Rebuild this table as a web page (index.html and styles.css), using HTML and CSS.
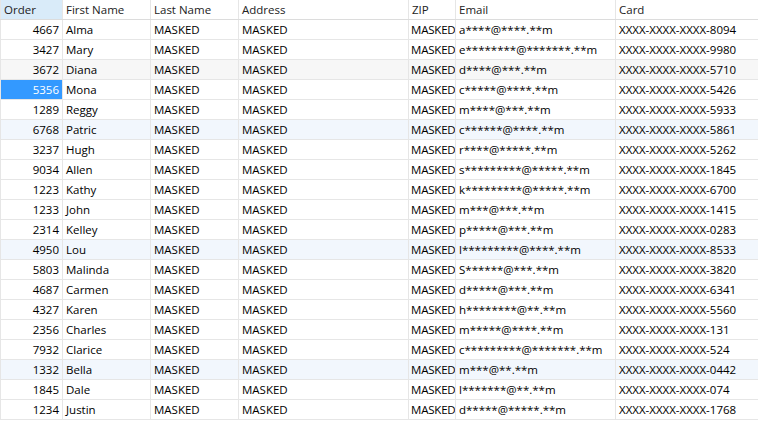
FILE: index.html
```html
<!DOCTYPE html>
<html lang="en">
<head>
    <meta charset="UTF-8">
    <title>Customers</title>
    <link rel="stylesheet" href="styles.css">
</head>
<body>
    <div class="grid">
        <table>
            <colgroup>
                <col class="c-order">
                <col class="c-first">
                <col class="c-last">
                <col class="c-addr">
                <col class="c-zip">
                <col class="c-email">
                <col class="c-card">
            </colgroup>
            <thead>
                <tr>
                    <th class="sorted">Order</th>
                    <th>First Name</th>
                    <th>Last Name</th>
                    <th>Address</th>
                    <th>ZIP</th>
                    <th>Email</th>
                    <th>Card</th>
                </tr>
            </thead>
            <tbody>
                <tr><td class="num">4667</td><td>Alma</td><td>MASKED</td><td>MASKED</td><td class="zip">MASKED</td><td>a****@****.**m</td><td>XXXX-XXXX-XXXX-8094</td></tr>
                <tr><td class="num">3427</td><td>Mary</td><td>MASKED</td><td>MASKED</td><td class="zip">MASKED</td><td>e********@*******.**m</td><td>XXXX-XXXX-XXXX-9980</td></tr>
                <tr class="alt"><td class="num">3672</td><td>Diana</td><td>MASKED</td><td>MASKED</td><td class="zip">MASKED</td><td>d****@***.**m</td><td>XXXX-XXXX-XXXX-5710</td></tr>
                <tr><td class="num focused">5356</td><td>Mona</td><td>MASKED</td><td>MASKED</td><td class="zip">MASKED</td><td>c*****@****.**m</td><td>XXXX-XXXX-XXXX-5426</td></tr>
                <tr><td class="num">1289</td><td>Reggy</td><td>MASKED</td><td>MASKED</td><td class="zip">MASKED</td><td>m****@***.**m</td><td>XXXX-XXXX-XXXX-5933</td></tr>
                <tr class="hl"><td class="num">6768</td><td>Patric</td><td>MASKED</td><td>MASKED</td><td class="zip">MASKED</td><td>c******@****.**m</td><td>XXXX-XXXX-XXXX-5861</td></tr>
                <tr><td class="num">3237</td><td>Hugh</td><td>MASKED</td><td>MASKED</td><td class="zip">MASKED</td><td>r****@*****.**m</td><td>XXXX-XXXX-XXXX-5262</td></tr>
                <tr><td class="num">9034</td><td>Allen</td><td>MASKED</td><td>MASKED</td><td class="zip">MASKED</td><td>s*********@*****.**m</td><td>XXXX-XXXX-XXXX-1845</td></tr>
                <tr><td class="num">1223</td><td>Kathy</td><td>MASKED</td><td>MASKED</td><td class="zip">MASKED</td><td>k*********@*****.**m</td><td>XXXX-XXXX-XXXX-6700</td></tr>
                <tr><td class="num">1233</td><td>John</td><td>MASKED</td><td>MASKED</td><td class="zip">MASKED</td><td>m***@***.**m</td><td>XXXX-XXXX-XXXX-1415</td></tr>
                <tr><td class="num">2314</td><td>Kelley</td><td>MASKED</td><td>MASKED</td><td class="zip">MASKED</td><td>p*****@***.**m</td><td>XXXX-XXXX-XXXX-0283</td></tr>
                <tr class="hl"><td class="num">4950</td><td>Lou</td><td>MASKED</td><td>MASKED</td><td class="zip">MASKED</td><td>l*********@****.**m</td><td>XXXX-XXXX-XXXX-8533</td></tr>
                <tr><td class="num">5803</td><td>Malinda</td><td>MASKED</td><td>MASKED</td><td class="zip">MASKED</td><td>S******@***.**m</td><td>XXXX-XXXX-XXXX-3820</td></tr>
                <tr><td class="num">4687</td><td>Carmen</td><td>MASKED</td><td>MASKED</td><td class="zip">MASKED</td><td>d*****@***.**m</td><td>XXXX-XXXX-XXXX-6341</td></tr>
                <tr><td class="num">4327</td><td>Karen</td><td>MASKED</td><td>MASKED</td><td class="zip">MASKED</td><td>h********@**.**m</td><td>XXXX-XXXX-XXXX-5560</td></tr>
                <tr><td class="num">2356</td><td>Charles</td><td>MASKED</td><td>MASKED</td><td class="zip">MASKED</td><td>m*****@****.**m</td><td>XXXX-XXXX-XXXX-131</td></tr>
                <tr><td class="num">7932</td><td>Clarice</td><td>MASKED</td><td>MASKED</td><td class="zip">MASKED</td><td>c*********@*******.**m</td><td>XXXX-XXXX-XXXX-524</td></tr>
                <tr class="hl"><td class="num">1332</td><td>Bella</td><td>MASKED</td><td>MASKED</td><td class="zip">MASKED</td><td>m***@**.**m</td><td>XXXX-XXXX-XXXX-0442</td></tr>
                <tr><td class="num">1845</td><td>Dale</td><td>MASKED</td><td>MASKED</td><td class="zip">MASKED</td><td>l*******@**.**m</td><td>XXXX-XXXX-XXXX-074</td></tr>
                <tr><td class="num">1234</td><td>Justin</td><td>MASKED</td><td>MASKED</td><td class="zip">MASKED</td><td>d*****@*****.**m</td><td>XXXX-XXXX-XXXX-1768</td></tr>
            </tbody>
        </table>
    </div>
</body>
</html>
```

FILE: styles.css
```css
body {
    margin: 0;
    padding: 0;
    background: #fff;
    overflow: hidden;
    font-family: "Segoe UI", "Open Sans", sans-serif;
    font-size: 11.5px;
    color: #000;
}
.grid {
    width: 758px;
    height: 422px;
    overflow: hidden;
}
table {
    table-layout: fixed;
    border-collapse: collapse;
    width: 762px;
}
.c-order { width: 62px; }
.c-first { width: 88px; }
.c-last { width: 88px; }
.c-addr { width: 170px; }
.c-zip { width: 47px; }
.c-email { width: 160px; }
.c-card { width: 147px; }

th, td {
    height: 19px;
    padding: 0 0 0 3px;
    border-right: 1px solid #e6e6e6;
    border-bottom: 1px solid #e6e6e6;
    white-space: nowrap;
    overflow: hidden;
    text-align: left;
    font-weight: normal;
    line-height: 19px;
}
th:first-child, td:first-child {
    border-left: 1px solid #e6e6e6;
}
th {
    color: #222;
    border-bottom-color: #dcdcdc;
}
th.sorted {
    background: #d9ebf9;
}
td.num {
    text-align: right;
    padding: 0 3px 0 0;
}
td.zip {
    padding-left: 2px;
    letter-spacing: -0.2px;
}
tr.alt td {
    background: #f7f7f7;
}
tr.hl td {
    background: #f2f7fd;
}
td.focused {
    background: #3399ff;
    color: #fff;
}
```
